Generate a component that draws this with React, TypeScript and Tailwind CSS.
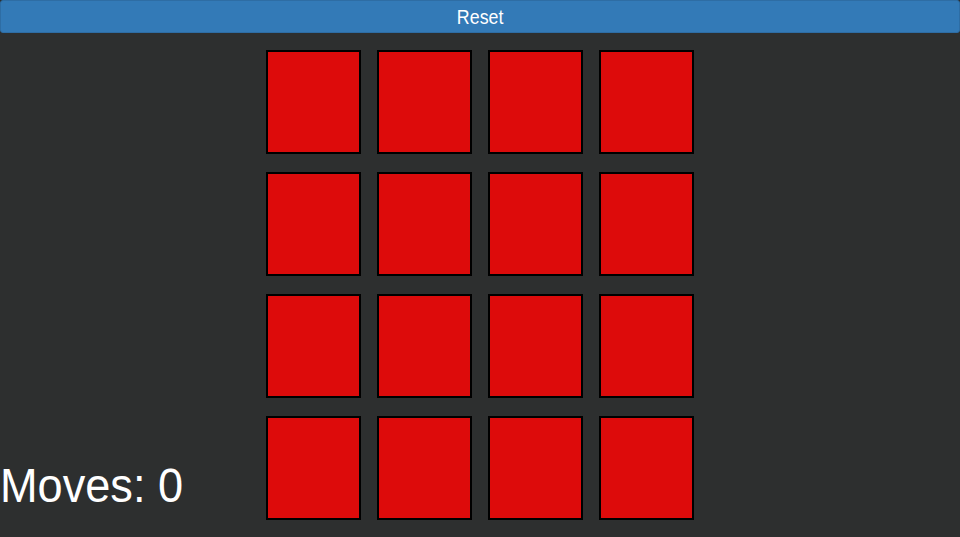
import { useState } from "react";

const CARD_COUNT = 16;

const App = () => {
  const [moves, setMoves] = useState(0);

  return (
    <div
      className="relative min-h-screen h-[537px] overflow-hidden bg-[#2d2f2f]"
      style={{ fontFamily: '"Liberation Sans", Arial, sans-serif' }}
    >
      <button
        type="button"
        onClick={() => setMoves(0)}
        className="block w-full h-[33px] bg-[#337ab7] border border-[#2e6da4] rounded-[3px] text-white text-[20px] leading-none"
      >
        <span className="inline-block scale-x-[0.89]">Reset</span>
      </button>

      {/* Board */}
      <div className="mt-[17px] mx-auto grid w-[428px] grid-cols-[repeat(4,95px)] auto-rows-[104px] gap-x-4 gap-y-[18px]">
        {Array.from({ length: CARD_COUNT }).map((_, i) => (
          <div
            key={i}
            onClick={() => setMoves((m) => m + 1)}
            className="bg-[#dd0b0b] border-2 border-black"
          />
        ))}
      </div>

      <div className="absolute left-0 top-[458px] origin-left scale-x-[0.94] text-white text-[48px] leading-[55px]">
        Moves: {moves}
      </div>
    </div>
  );
};

export default App;
